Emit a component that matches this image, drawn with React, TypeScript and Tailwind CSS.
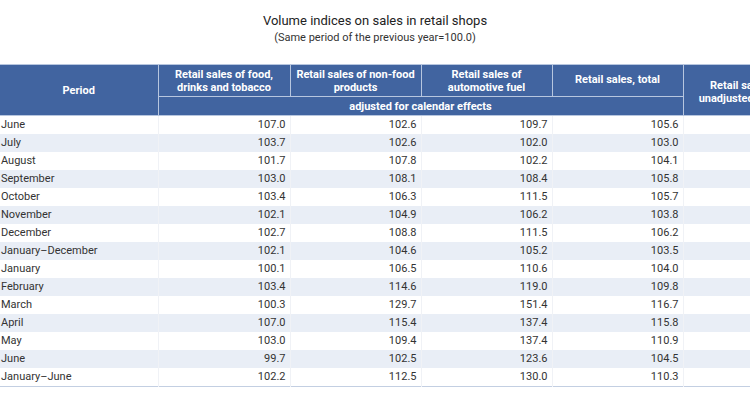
const rows: [string, string, string, string, string][] = [
  ["June", "107.0", "102.6", "109.7", "105.6"],
  ["July", "103.7", "102.6", "102.0", "103.0"],
  ["August", "101.7", "107.8", "102.2", "104.1"],
  ["September", "103.0", "108.1", "108.4", "105.8"],
  ["October", "103.4", "106.3", "111.5", "105.7"],
  ["November", "102.1", "104.9", "106.2", "103.8"],
  ["December", "102.7", "108.8", "111.5", "106.2"],
  ["January–December", "102.1", "104.6", "105.2", "103.5"],
  ["January", "100.1", "106.5", "110.6", "104.0"],
  ["February", "103.4", "114.6", "119.0", "109.8"],
  ["March", "100.3", "129.7", "151.4", "116.7"],
  ["April", "107.0", "115.4", "137.4", "115.8"],
  ["May", "103.0", "109.4", "137.4", "110.9"],
  ["June", "99.7", "102.5", "123.6", "104.5"],
  ["January–June", "102.2", "112.5", "130.0", "110.3"],
];

const th =
  "border border-[#b7c6df] bg-[#4164a0] p-0 text-center align-middle text-[11px] font-bold leading-[13px] text-white whitespace-nowrap";

export default function App() {
  return (
    <div className="h-[420px] w-[750px] overflow-hidden bg-white font-['Roboto',sans-serif] text-[#333]">
      <div className="pt-[12px] text-center">
        <h1 className="text-[13px] leading-[17px] text-[#222]">
          Volume indices on sales in retail shops
        </h1>
        <p className="mt-[1px] text-[11px] leading-[16px] text-[#333]">
          (Same period of the previous year=100.0)
        </p>
      </div>

      <table className="mt-[18px] w-[797px] table-fixed border-collapse border-t border-b border-[#c3cfe2]">
        <colgroup>
          <col className="w-[158px]" />
          <col className="w-[132px]" />
          <col className="w-[131px]" />
          <col className="w-[131px]" />
          <col className="w-[131px]" />
          <col className="w-[114px]" />
        </colgroup>
        <thead>
          <tr className="h-[32px]">
            <th rowSpan={2} className={th + " border-l-0"}>
              Period
            </th>
            <th className={th}>
              Retail sales of food,
              <br />
              drinks and tobacco
            </th>
            <th className={th}>
              Retail sales of non-food
              <br />
              products
            </th>
            <th className={th}>
              Retail sales of
              <br />
              automotive fuel
            </th>
            <th className={th + " pb-[2px]"}>Retail sales, total</th>
            <th rowSpan={2} className={th + " pt-[4px]"}>
              Retail sales,
              <br />
              unadjusted, total
            </th>
          </tr>
          <tr className="h-[19px]">
            <th colSpan={4} className={th}>
              adjusted for calendar effects
            </th>
          </tr>
        </thead>
        <tbody>
          {rows.map((r, i) => (
            <tr
              key={i}
              className={
                "h-[18px] text-[11px] leading-[18px] " +
                (i % 2 === 1 ? "bg-[#e9eef6]" : "bg-white")
              }
            >
              <td className="border-r border-[#f0f2f6] p-0 pl-[1px] text-left">{r[0]}</td>
              {r.slice(1).map((v, j) => (
                <td key={j} className="border-r border-[#f0f2f6] p-0 pr-[4px] text-right">
                  {v}
                </td>
              ))}
              <td className="p-0 pr-[4px] text-right"></td>
            </tr>
          ))}
        </tbody>
      </table>
    </div>
  );
}
